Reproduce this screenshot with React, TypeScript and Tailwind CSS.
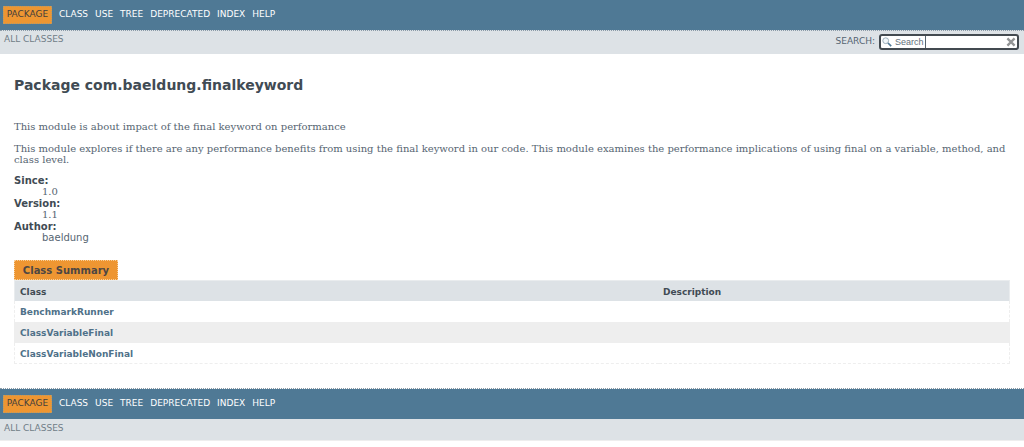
import React from "react";

const links = ["Class", "Use", "Tree", "Deprecated", "Index", "Help"];

const classes = ["BenchmarkRunner", "ClassVariableFinal", "ClassVariableNonFinal"];

const details = [
  { term: "Since:", value: "1.0", serif: true },
  { term: "Version:", value: "1.1", serif: true },
  { term: "Author:", value: "baeldung", serif: false },
];

function NavBar({ label }: { label: string }) {
  return (
    <nav aria-label={label} className="bg-[#4f7995] px-[3px] py-[6px] text-[9px] uppercase text-white">
      <ul className="flex items-center gap-[7px]">
        <li className="flex h-[18px] w-[49px] items-center justify-center border border-dotted border-[#b09a70] bg-[#ee9632] text-[#453f3c]">
          Package
        </li>
        {links.map((link) => (
          <li key={link}>
            <a href={`#${link.toLowerCase()}`}>{link}</a>
          </li>
        ))}
      </ul>
    </nav>
  );
}

function SearchIcon() {
  return (
    <svg viewBox="0 0 10 10" className="h-[10px] w-[10px] shrink-0" fill="none" aria-hidden="true">
      <circle cx="3.7" cy="3.7" r="2.9" fill="#f2f7fa" stroke="#9eb0bb" />
      <path d="M6 6l3.2 3.2" stroke="#527a96" strokeWidth="1.7" />
    </svg>
  );
}

function ClearIcon() {
  return (
    <svg viewBox="0 0 10 10" className="h-[10px] w-[10px]" fill="none" aria-hidden="true">
      <path d="M1.4 1.4l7.2 7.2M8.6 1.4L1.4 8.6" stroke="#929495" strokeWidth="2.3" />
    </svg>
  );
}

export default function App() {
  return (
    <div className="bg-white font-['DejaVu_Sans',sans-serif] text-[10px] text-[#566572]">
      <header>
        <NavBar label="Top" />
        <div className="flex h-6 items-start justify-between border-t border-dotted border-[#8b9ba8] bg-[#dde2e6] pl-1 pr-[5px] text-[9px] uppercase">
          <a href="#all-classes" className="pt-[3px] leading-[11px] text-[#707d87]">All Classes</a>
          <div className="flex items-center gap-1 pt-[3px]">
            <label htmlFor="search">Search:</label>
            <div className="relative flex h-4 w-[140px] items-center gap-[3px] rounded-[3px] border-2 border-[#434a50] bg-white px-px">
              <SearchIcon />
              <input
                id="search"
                type="text"
                defaultValue="Search"
                className="w-0 min-w-0 grow bg-transparent font-['Liberation_Sans',sans-serif] text-[9px] leading-3 text-[#64717c] caret-transparent outline-none"
              />
              <span className="absolute left-[44px] top-0 h-3 w-px bg-[#56636d]" />
              <button type="button" aria-label="Clear search">
                <ClearIcon />
              </button>
            </div>
          </div>
        </div>
      </header>

      <main className="px-[14px] pb-6 pt-[22px]">
        <h1 className="text-[14px] font-bold leading-[18px] text-[#414b54]">Package com.baeldung.finalkeyword</h1>
        <div className="mt-[27px] font-['DejaVu_Serif',serif] text-[10px] leading-[11px]">
          <p>This module is about impact of the final keyword on performance</p>
          <p className="mt-[11px]">
            This module explores if there are any performance benefits from using the final keyword in our code. This
            module examines the performance implications of using final on a variable, method, and class level.
          </p>
        </div>
        <dl className="mt-[10px] text-[10px] leading-[11px]">
          {details.map(({ term, value, serif }) => (
            <React.Fragment key={term}>
              <dt className="font-bold text-[#414b54]">{term}</dt>
              <dd className={serif ? "ml-7 font-['DejaVu_Serif',serif] leading-3" : "ml-7 leading-3"}>{value}</dd>
            </React.Fragment>
          ))}
        </dl>

        <table className="mt-4 w-full table-fixed border-separate border-spacing-0 text-left text-[9px] leading-[11px]">
          <caption className="text-left">
            <span className="flex h-5 w-[104px] items-center justify-center border border-dotted border-[#f8cf9a] bg-[#ee9632] text-[10px] font-bold text-[#4d4643]">
              Class Summary
            </span>
          </caption>
          <thead>
            <tr className="h-[21px] bg-[#dde2e6] text-[#414b54]">
              <th className="w-[645px] border-l border-t border-[#e9ecee] pl-[5px] pt-[2px]">Class</th>
              <th className="border-r border-t border-[#e9ecee] pl-1 pt-[2px]">Description</th>
            </tr>
          </thead>
          <tbody>
            {classes.map((name) => (
              <tr key={name} className="group h-[21px] even:bg-[#eeeeee]">
                <th scope="row" className="border-l border-dashed border-[#eeeeee] pl-[5px] pt-[2px] group-last:border-b">
                  <a href={`#${name}`} className="text-[#4f7189]">{name}</a>
                </th>
                <td className="border-r border-dashed border-[#eeeeee] group-last:border-b" />
              </tr>
            ))}
          </tbody>
        </table>
      </main>

      <footer className="border-t border-dotted border-[#8b9ba8]">
        <NavBar label="Bottom" />
        <div className="h-[22px] border-b border-[#eeeeee] bg-[#dde2e6] pl-1 pt-1 text-[9px] uppercase leading-[11px] text-[#707d87]">
          <a href="#all-classes">All Classes</a>
        </div>
      </footer>
    </div>
  );
}
